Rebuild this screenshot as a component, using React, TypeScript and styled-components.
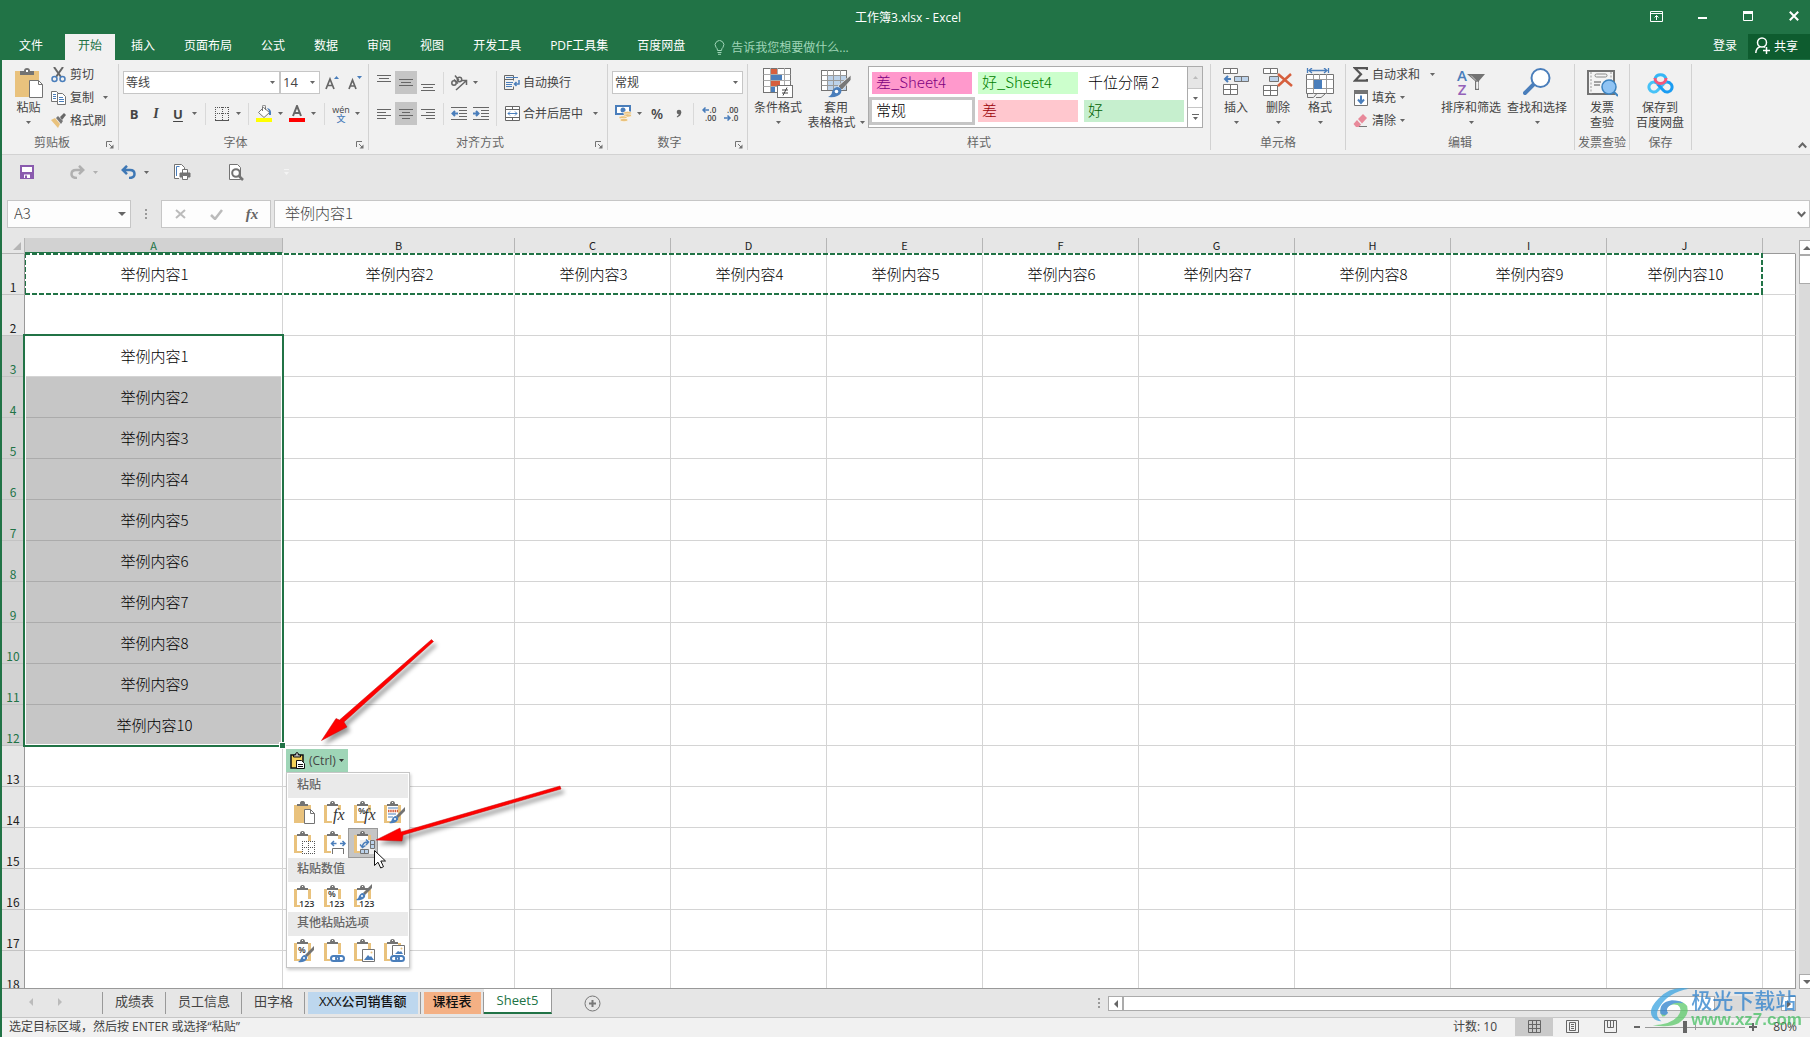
import React from "react";
import styled, { createGlobalStyle, css } from "styled-components";

const UI = `"Open Sans", "Noto Sans CJK SC", sans-serif`;
const SHEET = `"Noto Sans CJK SC", sans-serif`;
const GREEN = "#217346";
const BLUE = "#4a7ebb";
const GREY = "#737373";
const TAN = "#e9c27d";

const Global = createGlobalStyle`
  *, *::before, *::after { box-sizing: border-box; }
  body { margin: 0; font-family: ${UI}; font-size: 12px; color: #444; }
  button, input, select { font: inherit; color: inherit; margin: 0; }
  svg { display: block; flex: none; }
`;

const Window = styled.div`
  height: 100vh;
  display: flex;
  flex-direction: column;
  overflow: hidden;
  background: #e6e6e6;
  border-left: 2px solid ${GREEN};
`;

const plain = css`
  border: 0;
  padding: 0;
  background: transparent;
  white-space: nowrap;
  cursor: default;
`;

/* ---------- title bar and tabs ---------- */
const TitleBar = styled.header`
  display: grid;
  grid-template-columns: 1fr auto 1fr;
  height: 34px;
  background: ${GREEN};
  color: #fff;
`;
const Title = styled.h1`
  grid-column: 2;
  margin: 0;
  padding-left: 4px;
  font-size: 12px;
  font-weight: 400;
  line-height: 35px;
`;
const WindowControls = styled.div`
  display: flex;
  justify-content: flex-end;
  gap: 14px;
`;
const WindowButton = styled.button`
  ${plain}
  width: 32px;
  height: 32px;
  display: grid;
  place-items: center;
`;
const TabRow = styled.nav`
  display: flex;
  gap: 3px;
  height: 26px;
  background: ${GREEN};
  color: #fff;
`;
const Tab = styled.button<{ $active?: boolean; $file?: boolean }>`
  ${plain}
  line-height: 24px;
  padding: ${(p) => (p.$file ? "0 19px 2px 17px" : "0 13px 2px")};
  background: ${(p) => (p.$active ? "#f1f1f1" : "transparent")};
  color: ${(p) => (p.$active ? GREEN : "#fff")};
`;
const TellMe = styled.label`
  display: flex;
  align-items: center;
  gap: 6px;
  flex: 1;
  padding-left: 13px;
  color: #9fd5b7;
`;
const TellInput = styled.input`
  ${plain}
  width: 160px;
  outline: none;
  &::placeholder { color: #9fd5b7; opacity: 1; }
`;
const ShareButton = styled.button`
  ${plain}
  display: flex;
  align-items: center;
  gap: 4px;
  height: 25px;
  padding: 0 12px 2px 7px;
  margin-left: -5px;
  background: #0e5c2f;
  color: #fff;
`;

/* ---------- ribbon ---------- */
const Ribbon = styled.section`
  display: flex;
  height: 95px;
  padding: 4px 0;
  background: #f1f1f1;
  border-bottom: 1px solid #d2d2d2;
`;
const GroupBox = styled.div<{ $w: number }>`
  width: ${(p) => p.$w}px;
  flex: none;
  display: flex;
  flex-direction: column;
  border-right: 1px solid #d2d2d2;
`;
const GroupBody = styled.div<{ $pad?: number }>`
  display: flex;
  height: 72px;
  padding-left: ${(p) => p.$pad ?? 0}px;
`;
const GroupFoot = styled.div<{ $launch?: boolean }>`
  display: grid;
  grid-template-columns: ${(p) => (p.$launch ? "1fr 16px" : "1fr")};
  align-items: center;
  height: 14px;
  line-height: 14px;
  text-align: center;
  white-space: nowrap;
  color: #666;
`;
const Launcher = styled.button`
  ${plain}
  height: 10px;
  display: grid;
  place-items: center;
  align-self: end;
`;
const Rows = styled.div`
  display: flex;
  flex-direction: column;
  gap: 8px;
  padding-top: 7px;
`;
const Row = styled.div`
  display: flex;
  align-items: center;
  height: 23px;
`;
const Sep = styled.span<{ $tall?: boolean; $m?: number }>`
  width: 1px;
  height: ${(p) => (p.$tall ? 55 : 22)}px;
  margin: ${(p) => (p.$tall ? "7px" : "0")} ${(p) => p.$m ?? 4}px 0;
  background: #d9d9d9;
`;
const IconButton = styled.button<{ $w?: number; $on?: boolean }>`
  ${plain}
  width: ${(p) => p.$w ?? 22}px;
  height: 23px;
  display: grid;
  place-items: center;
  background: ${(p) => (p.$on ? "#c5c5c5" : "transparent")};
`;
const Letter = styled.span<{ $i?: boolean; $u?: boolean; $thin?: boolean }>`
  font-size: ${(p) => (p.$i || p.$thin ? 14 : 13)}px;
  line-height: 16px;
  font-weight: ${(p) => (p.$thin ? 600 : 700)};
  font-family: ${(p) => (p.$i ? `"Liberation Serif", serif` : UI)};
  font-style: ${(p) => (p.$i ? "italic" : "normal")};
  text-decoration: ${(p) => (p.$u ? "underline" : "none")};
  text-underline-offset: 2px;
`;
const TextButton = styled.button`
  ${plain}
  display: flex;
  align-items: center;
  gap: 3px;
  height: 23px;
  line-height: 23px;
`;
const Spread = styled.span<{ $w: number }>`
  width: ${(p) => p.$w}px;
  display: flex;
  justify-content: flex-end;
`;
const Stack = styled.div`
  display: flex;
  flex-direction: column;
  align-items: flex-start;
  & > button { padding-bottom: 2px; gap: 4px; }
`;
const BigButton = styled.button<{ $w: number }>`
  ${plain}
  width: ${(p) => p.$w}px;
  height: 68px;
  padding-top: 2px;
  display: flex;
  flex-direction: column;
  align-items: center;
  line-height: 15px;
  flex: none;
`;
const BigIcon = styled.span`
  height: 34px;
  padding-top: 2px;
`;
const BigCaret = styled.span`
  height: 15px;
  display: grid;
  place-items: center;
`;
const CaretLine = styled.span`
  display: flex;
  align-items: center;
  gap: 4px;
`;
const SelectBox = styled.span<{ $w: number }>`
  display: grid;
  grid-template-columns: 1fr 14px;
  align-items: center;
  width: ${(p) => p.$w}px;
  height: 23px;
  background: #fff;
  border: 1px solid #c6c6c6;
`;
const Select = styled.select<{ $size?: number }>`
  ${plain}
  appearance: none;
  grid-area: 1 / 1 / 2 / 3;
  width: 100%;
  height: 21px;
  line-height: 21px;
  padding-left: 2px;
  font-size: ${(p) => p.$size ?? 12}px;
  outline: none;
`;
const SelectArrow = styled.span`
  grid-area: 1 / 2;
  pointer-events: none;
  display: grid;
  place-items: center;
`;

/* ---------- style gallery ---------- */
const Gallery = styled.div`
  display: flex;
  flex: none;
  width: 335px;
  height: 62px;
  margin: 2px 0 0 2px;
  background: #fff;
  border: 1px solid #ababab;
`;
const Swatches = styled.div`
  flex: 1;
  display: grid;
  grid-template-columns: repeat(3, 106px);
  grid-template-rows: 28px 28px;
  padding-top: 2px;
`;
const Swatch = styled.button<{ $bg: string; $fg: string; $on?: boolean }>`
  ${plain}
  padding: 0 4px 2px;
  text-align: left;
  font-family: ${SHEET};
  font-size: 15px;
  font-weight: 300;
  line-height: 20px;
  color: ${(p) => p.$fg};
  background: ${(p) => p.$bg};
  background-clip: padding-box;
  border: 3px solid ${(p) => (p.$on ? "#c6c6c6" : "transparent")};
`;
const GalleryNav = styled.div`
  width: 15px;
  display: grid;
  grid-template-rows: 21px 19px 20px;
  border-left: 1px solid #ababab;
`;
const GalleryStep = styled.button<{ $off?: boolean }>`
  ${plain}
  display: grid;
  place-items: center;
  background: ${(p) => (p.$off ? "#e6e6e6" : "#fff")};
  & + & { border-top: 1px solid #c6c6c6; }
`;
const Collapse = styled.button`
  ${plain}
  margin-left: auto;
  align-self: flex-end;
  padding: 0 3px 1px 0;
`;

/* ---------- quick access and formula bar ---------- */
const Quick = styled.div`
  display: flex;
  align-items: center;
  height: 45px;
  padding: 0 0 11px 14px;
`;
const QuickButton = styled.button<{ $gap?: number; $drop?: boolean }>`
  ${plain}
  width: ${(p) => (p.$drop ? 14 : 22)}px;
  height: 24px;
  margin-right: ${(p) => p.$gap ?? 0}px;
  display: grid;
  place-items: center;
`;
const FormulaRow = styled.div`
  display: flex;
  height: 28px;
  padding-left: 5px;
  font-family: ${SHEET};
  font-size: 15px;
`;
const Boxed = styled.div<{ $w?: number }>`
  display: flex;
  align-items: center;
  width: ${(p) => (p.$w ? `${p.$w}px` : "auto")};
  flex: ${(p) => (p.$w ? "none" : "1")};
  background: #fdfdfd;
  border: 1px solid #c6c6c6;
`;
const BarInput = styled.input<{ $pad: number }>`
  ${plain}
  flex: 1;
  min-width: 0;
  height: 26px;
  padding: 0 0 3px ${(p) => p.$pad}px;
  font-weight: 300;
  outline: none;
`;
const BoxEnd = styled.span`
  width: 16px;
  display: grid;
  place-items: center;
`;
const Dots = styled.span<{ $w: number }>`
  width: ${(p) => p.$w}px;
  display: grid;
  place-items: center;
`;
const FnButton = styled.button`
  ${plain}
  flex: 1;
  height: 26px;
  display: grid;
  place-items: center;
`;
const Fx = styled.span`
  font: italic 700 15px/18px "Liberation Serif", serif;
  color: #666;
`;

/* ---------- grid ---------- */
const GridArea = styled.main`
  flex: 1;
  min-height: 0;
  display: flex;
  margin-top: 10px;
`;
const GridView = styled.div`
  position: relative;
  flex: 1;
  min-width: 0;
  overflow: hidden;
  border-bottom: 1px solid #999;
`;
const Table = styled.table`
  width: 100%;
  table-layout: fixed;
  border-collapse: separate;
  border-spacing: 0;
  font-family: ${SHEET};
`;
const ColHead = styled.th<{ $on?: boolean }>`
  height: 16px;
  padding: 0;
  font-size: 11px;
  font-weight: 400;
  line-height: 13px;
  color: ${(p) => (p.$on ? GREEN : "#222")};
  background: ${(p) => (p.$on ? "#d2d2d2" : "#e6e6e6")};
  border-right: 1px solid #b5b5b5;
  border-bottom: ${(p) => (p.$on ? `2px solid ${GREEN}` : "1px solid #999")};
  &:last-child { border-right-color: transparent; }
`;
const Corner = styled.td`
  padding: 0 3px 0 0;
  background: #e6e6e6;
  border-right: 1px solid #b5b5b5;
  border-bottom: 1px solid #b5b5b5;
  svg { margin-left: auto; }
`;
const RowHead = styled.th<{ $on?: boolean }>`
  height: 41px;
  padding: 0;
  vertical-align: bottom;
  font-size: 12px;
  font-weight: 400;
  line-height: 14px;
  color: ${(p) => (p.$on ? GREEN : "#222")};
  background: ${(p) => (p.$on ? "#d2d2d2" : "#e6e6e6")};
  border-right: 1px solid #999;
  border-bottom: 1px solid #c3c3c3;
`;
const Cell = styled.td<{ $fill?: boolean }>`
  height: 41px;
  padding: 0 0 0 2px;
  text-align: center;
  font-size: 15px;
  font-weight: 300;
  line-height: 24px;
  color: #000;
  background: ${(p) => (p.$fill ? "#c6c6c6" : "#fff")};
  border-right: 1px solid #d4d4d4;
  border-bottom: 1px solid ${(p) => (p.$fill ? "#ababab" : "#d4d4d4")};
  &:last-child { border-right-color: #999; }
`;
const Selection = styled.div`
  position: absolute;
  left: 21px;
  top: 96px;
  width: 261px;
  height: 413px;
  border: 2px solid ${GREEN};
  box-shadow: inset 0 0 0 1px #fff;
  pointer-events: none;
  &::after {
    content: "";
    position: absolute;
    right: -4px;
    bottom: -4px;
    width: 7px;
    height: 7px;
    background: ${GREEN};
    border: 1px solid #fff;
  }
`;
const dashX = `repeating-linear-gradient(90deg, ${GREEN} 0 5px, #fff 5px 7px)`;
const dashY = `repeating-linear-gradient(180deg, ${GREEN} 0 5px, #fff 5px 7px)`;
const CopyMarquee = styled.div`
  position: absolute;
  left: 23px;
  top: 15px;
  width: 1738px;
  height: 42px;
  pointer-events: none;
  background: ${dashX} 0 0 / 100% 2px no-repeat, ${dashX} 0 100% / 100% 2px no-repeat,
    ${dashY} 0 0 / 1px 100% no-repeat, ${dashY} 100% 0 / 2px 100% no-repeat;
`;
const PasteOptions = styled.div`
  position: absolute;
  left: 284px;
  top: 511px;
`;
const CtrlButton = styled.button`
  ${plain}
  display: flex;
  align-items: center;
  gap: 3px;
  width: 62px;
  height: 23px;
  padding-left: 4px;
  background: #9fd5b7;
`;
const Menu = styled.div`
  width: 124px;
  padding: 1px;
  background: #fff;
  border: 1px solid #c6c6c6;
  box-shadow: 1px 2px 3px rgba(0, 0, 0, 0.2);
`;
const MenuHead = styled.div`
  height: 24px;
  padding-left: 9px;
  line-height: 22px;
  font-weight: 500;
  color: #666;
  background: #eaeaea;
`;
const MenuGrid = styled.div`
  display: grid;
  grid-template-columns: repeat(4, 30px);
  grid-auto-rows: 30px;
`;
const MenuItem = styled.button<{ $on?: boolean }>`
  ${plain}
  display: grid;
  place-items: center;
  background: ${(p) => (p.$on ? "#c5c5c5" : "transparent")};
  box-shadow: ${(p) => (p.$on ? "inset 0 0 0 1px #999" : "none")};
`;
const Annotation = styled.svg`
  position: absolute;
  left: 308px;
  top: 392px;
  pointer-events: none;
  filter: drop-shadow(3px 4px 2px rgba(0, 0, 0, 0.4));
`;
const Pointer = styled.svg`
  position: absolute;
  left: 371px;
  top: 611px;
`;
const VScroll = styled.div`
  width: 14px;
  padding: 2px 0 0 3px;
  display: flex;
  flex-direction: column;
  overflow: hidden;
`;
const VTrack = styled.div`
  flex: 1;
  width: 16px;
  background: #dadada;
`;
const VThumb = styled.div`
  height: 29px;
  background: #fff;
  border: 1px solid #ababab;
`;
const ScrollButton = styled.button`
  ${plain}
  width: 15px;
  height: 15px;
  flex: none;
  display: grid;
  place-items: center;
  background: #fff;
  border: 1px solid #ababab;
`;

/* ---------- sheet tabs and status ---------- */
const SheetBar = styled.div`
  display: flex;
  height: 28px;
  font-family: ${UI};
  font-size: 13px;
`;
const SheetNav = styled.div`
  width: 100px;
  display: flex;
  align-items: center;
  gap: 21px;
  padding: 0 0 2px 25px;
`;
const SheetTab = styled.button<{ $bg?: string; $on?: boolean; $pad?: number }>`
  ${plain}
  height: 22px;
  margin: 3px 2px 0 3px;
  line-height: 17px;
  padding: 0 ${(p) => p.$pad ?? 9}px 3px;
  color: ${(p) => (p.$bg ? "#111" : "#444")};
  font-weight: ${(p) => (p.$bg ? 500 : 400)};
  background: ${(p) => p.$bg ?? "transparent"};
  ${(p) =>
    p.$on &&
    css`
      height: 25px;
      margin: 0;
      padding: 0 13px 1px;
      line-height: 20px;
      color: ${GREEN};
      background: #fff;
      border-right: 1px solid #999;
      border-bottom: 2px solid ${GREEN};
    `}
`;
const TabSep = styled.span`
  width: 1px;
  height: 22px;
  margin-top: 3px;
  background: #999;
`;
const AddSheet = styled.button`
  ${plain}
  margin: 0 0 0 32px;
`;
const HScroll = styled.div`
  display: flex;
  width: 706px;
  height: 15px;
  margin: 7px 14px 0 auto;
`;
const HTrack = styled.div`
  flex: 1;
  background: #dadada;
`;
const HThumb = styled.div`
  width: 90%;
  height: 15px;
  background: #fff;
  border: 1px solid #ababab;
`;
const StatusBar = styled.footer`
  display: flex;
  align-items: center;
  height: 20px;
  padding: 0 13px 2px 7px;
  background: #f1f1f1;
  border-top: 1px solid #c6c6c6;
  line-height: 17px;
`;
const Count = styled.span`
  margin: 0 18px 0 auto;
`;
const ViewButton = styled.button<{ $on?: boolean }>`
  ${plain}
  width: 38px;
  height: 19px;
  display: grid;
  place-items: center;
  background: ${(p) => (p.$on ? "#cacaca" : "transparent")};
`;
const ZoomStep = styled.button`
  ${plain}
  width: 16px;
  height: 18px;
  display: grid;
  place-items: center;
`;
const Zoom = styled.input`
  appearance: none;
  width: 100px;
  height: 12px;
  background: linear-gradient(#999, #999) 0 6px / 100% 1px no-repeat,
    linear-gradient(#999, #999) 50px 4px / 1px 5px no-repeat;
  &::-webkit-slider-thumb {
    appearance: none;
    width: 4px;
    height: 12px;
    background: #666;
  }
`;
const ZoomText = styled.span`
  width: 36px;
  text-align: right;
`;
const Watermark = styled.div`
  position: fixed;
  right: 8px;
  bottom: 9px;
  display: flex;
  align-items: flex-end;
  opacity: 0.75;
  pointer-events: none;
`;
const WatermarkText = styled.div`
  font-family: ${SHEET};
  font-size: 21px;
  font-weight: 500;
  line-height: 26px;
  color: #2a7fcb;
`;
const WatermarkUrl = styled.div`
  font-family: "Liberation Sans", sans-serif;
  font-size: 17px;
  line-height: 16px;
  font-weight: 700;
  color: #45bf62;
`;

/* ---------- icons ---------- */
const Caret = ({ c = "#666" }: { c?: string }) => (
  <svg width="5" height="3" viewBox="0 0 5 3"><path d="M0 0h5L2.5 3z" fill={c} /></svg>
);
const LaunchIcon = () => (
  <svg width="8" height="8" viewBox="0 0 8 8" fill="none" stroke={GREY}>
    <path d="M.5 6V.5H6M3 3l3 3" /><path d="M7.5 3.5v4h-4z" fill={GREY} stroke="none" />
  </svg>
);
const Lines = ({ rows }: { rows: [number, number, number][] }) => (
  <svg width="14" height="16" viewBox="0 0 14 16" stroke="#666">
    {rows.map(([x, w, y]) => <path key={y} d={`M${x} ${y + 0.5}h${w}`} />)}
  </svg>
);
const PasteIcon = () => (
  <svg width="28" height="31" viewBox="0 0 28 31">
    <rect y="3" width="24" height="26" fill={TAN} />
    <path d="M5 7V3h4a3 3 0 0 1 6 0h4v4z" fill={GREY} /><rect x="11" y="2" width="2" height="2" fill="#fff" />
    <path d="M14.500 12.500h9l4 4v13h-13z" fill="#fff" stroke={GREY} /><path d="M23.500 12.500v4h4" fill="none" stroke={GREY} />
  </svg>
);
const CutIcon = () => (
  <svg width="15" height="16" viewBox="0 0 15 16" fill="none">
    <path d="M3 0l7 10M12 0L5 10" stroke="#666" strokeWidth="2" />
    <circle cx="3.500" cy="12" r="2.500" stroke={BLUE} strokeWidth="1.500" /><circle cx="11.500" cy="12" r="2.500" stroke={BLUE} strokeWidth="1.500" />
  </svg>
);
const CopyIcon = () => (
  <svg width="15" height="15" viewBox="0 0 15 15" stroke={GREY}>
    <path d="M.5 1.500h5l2 2v8h-7z" fill="#fff" /><path d="M2 4.500h3M2 6.500h3M2 8.500h3" stroke={BLUE} />
    <path d="M6.500 3.500h5l3 3v8h-8z" fill="#fff" /><path d="M8 7.500h4M8 9.500h5M8 11.500h5" stroke={BLUE} />
  </svg>
);
const BrushIcon = () => (
  <svg width="15" height="15" viewBox="0 0 15 15">
    <path d="M0 7l4-2 5 6-2 4z" fill={TAN} /><path d="M5 5l2-2 5 5-2 3z" fill="#777" /><path d="M9 4l4-4 2 2-4 5z" fill="#666" />
  </svg>
);
const BorderIcon = () => (
  <svg width="14" height="14" viewBox="0 0 14 14" stroke="#555" fill="none">
    <path d="M0 .5h14M0 6.500h14M.5 0v13M7.500 0v13M13.500 0v13" strokeDasharray="1 1" /><path d="M0 13.500h14" />
  </svg>
);
const FillIcon = () => (
  <svg width="16" height="17" viewBox="0 0 16 17">
    <path d="M2.500 7.500l5-5 6 5-5.500 5z" fill="#fff" stroke="#777" /><path d="M6.500 6V1.500a1.500 1.500 0 0 1 3 0V5" fill="none" stroke="#777" />
    <path d="M11 3q5 1 4 7h-2V6z" fill={BLUE} /><rect y="13" width="16" height="4" fill="#ff0" />
  </svg>
);
const FontColorIcon = () => (
  <svg width="16" height="17" viewBox="0 0 16 17">
    <path d="M4 11L8 1l4 10M5.500 8h5" fill="none" stroke="#666" strokeWidth="2" /><rect y="13" width="16" height="4" fill="#f00" />
  </svg>
);
const Pinyin = styled.span`
  display: flex;
  flex-direction: column;
  align-items: center;
  font-size: 9px;
  line-height: 9px;
`;
const PinyinHan = styled.span`
  color: ${BLUE};
  font-weight: 500;
`;
const FontStep = ({ up }: { up?: boolean }) => (
  <svg width="14" height="15" viewBox="0 0 14 15">
    <path d={up ? "M1 14L5 4l4 10M2.500 10.500h5" : "M1 14l3.500-9L8 14M2.500 11h4"} fill="none" stroke="#666" strokeWidth="1.700" />
    <path d={up ? "M9 4l2.500-3L14 4z" : "M9 1h5l-2.500 3z"} fill={BLUE} />
  </svg>
);
const AngleIcon = () => (
  <svg width="18" height="16" viewBox="0 0 18 16" fill="none" stroke="#666">
    <circle cx="4" cy="8" r="2.200" strokeWidth="1.500" /><path d="M4 4.500l4 4" strokeWidth="1.500" />
    <circle cx="9.500" cy="4.500" r="2.200" strokeWidth="1.500" /><path d="M5 .5l4 5" strokeWidth="1.500" />
    <path d="M6 15L16 6M12 5.500h4.500V10" strokeWidth="1.500" />
  </svg>
);
const IndentIcon = ({ out }: { out?: boolean }) => (
  <svg width="16" height="13" viewBox="0 0 16 13" stroke="#666">
    <path d="M0 .5h16M8 3.500h8M8 6.500h8M8 9.500h8M0 12.500h16" />
    <path d={out ? "M7 6.500H1.500M4 4L1.500 6.500 4 9" : "M0 6.500h5.500M3 4l2.500 2.500L3 9"} fill="none" stroke={BLUE} strokeWidth="2" />
  </svg>
);
const WrapIcon = () => (
  <svg width="16" height="16" viewBox="0 0 16 16" fill="none" stroke="#666">
    <path d="M9.500 5.500v-5h-9v14h9v-3M.5 4.500h9" /><path d="M2 2.500h12M2 7.500h7M2 9.500h6M2 11.500h6" stroke={BLUE} />
    <path d="M15 5v4h-4M12.500 7L10.500 9l2 2" stroke={BLUE} strokeWidth="1.500" />
  </svg>
);
const MergeIcon = () => (
  <svg width="15" height="15" viewBox="0 0 15 15" fill="#fff" stroke="#666">
    <path d="M.5.5h14v14H.5zM.5 3.500h14M.5 11.500h14M7.500 0v3.500M7.500 11.500V15" />
    <path d="M3 7.500h9M5 5.500l-2 2 2 2M10 5.500l2 2-2 2" stroke={BLUE} fill="none" />
  </svg>
);
const MoneyIcon = () => (
  <svg width="17" height="17" viewBox="0 0 17 17">
    <rect x="1" y="1" width="14" height="8" fill="#fff" stroke={BLUE} strokeWidth="2" /><circle cx="8" cy="5" r="2.500" fill={BLUE} />
    <g fill={TAN} stroke="#fff" strokeWidth=".6"><ellipse cx="12.500" cy="8" rx="4" ry="1.700" /><ellipse cx="12.500" cy="10.500" rx="4" ry="1.700" /><ellipse cx="8" cy="12.500" rx="4" ry="1.700" /><ellipse cx="9" cy="15" rx="4" ry="1.700" /></g>
  </svg>
);
const CommaIcon = () => (
  <svg width="6" height="9" viewBox="0 0 6 9"><circle cx="3" cy="3" r="2.300" fill="#666" /><path d="M5.300 3Q5.300 7 1 8.500L.8 7.500Q3 6.500 3 4z" fill="#666" /></svg>
);
const Decimals = styled.span`
  display: grid;
  justify-items: end;
  font-size: 8px;
  line-height: 8px;
  font-weight: 600;
`;
const DecimalLine = styled.span`
  display: flex;
  align-items: center;
`;
const TinyArrow = ({ left }: { left?: boolean }) => (
  <svg width="8" height="6" viewBox="0 0 8 6" fill="none" stroke={BLUE} strokeWidth="1.500">
    <path d={left ? "M7 3H1M3.500.5L1 3l2.500 2.500" : "M0 3h6M3.500.5L6 3 3.500 5.500"} />
  </svg>
);
const CondIcon = () => (
  <svg width="30" height="30" viewBox="0 0 30 30">
    <rect x=".5" y=".5" width="27" height="24" fill="#fff" stroke={GREY} />
    <path d="M.5 6.500h27M.5 12.500h27M.5 18.500h27M7.500 0v24M14.500 0v24M21.500 0v24" stroke="#aaa" />
    <path d="M8 1h6v5H8zM8 13h9v5H8z" fill="#d65f3d" /><path d="M8 7h11v5H8zM8 19h4v5H8z" fill={BLUE} />
    <rect x="14.500" y="17.500" width="15" height="12" fill="#fff" stroke={GREY} /><path d="M19 22h6M19 25h6M24 19.500l-4 8" stroke="#444" />
  </svg>
);
const TableIcon = () => (
  <svg width="30" height="30" viewBox="0 0 30 30">
    <rect x=".5" y="2.500" width="25" height="20" fill="#fff" stroke={GREY} /><path d="M7 8h18v14H7z" fill="#bcd2ea" />
    <path d="M.5 7.500h25M.5 12.500h25M.5 17.500h25M6.500 2v20M12.500 2v20M19.500 2v20" stroke="#999" />
    <path d="M30 7v5l-9 10-4-4z" fill="#777" stroke="#f1f1f1" strokeWidth=".8" /><path d="M16 19q6 0 4 6-3 5-13 4 4-2 4-5 1-4 5-5z" fill={BLUE} /><circle cx="15.500" cy="23.500" r="1.800" fill="#fff" />
  </svg>
);
const InsertIcon = () => (
  <svg width="26" height="30" viewBox="0 0 26 30" fill="#fff" stroke={GREY}>
    <path d="M.5.5h14v5H.5zM7.500.5v5M.5 16.500h14v10H.5zM.5 21.500h14M7.500 16.500v10" />
    <path d="M11.500 8.500h14v5h-14zM18.500 8.500v5" fill="#bcd2ea" /><path d="M8 11H2M5 8l-3 3 3 3" fill="none" stroke={BLUE} strokeWidth="2" />
  </svg>
);
const DeleteIcon = () => (
  <svg width="30" height="30" viewBox="0 0 30 30" fill="#fff" stroke={GREY}>
    <path d="M.5.5h14v5H.5zM7.500.5v5M.5 17.500h14v10H.5zM.5 22.500h14M7.500 17.500v10" />
    <path d="M6.500 8.500h9v5h-9z" fill="#bcd2ea" /><path d="M15 6l14 12M28 6L15 18" stroke="#d65f3d" strokeWidth="2.500" />
  </svg>
);
const FormatIcon = () => (
  <svg width="29" height="32" viewBox="0 0 29 32" fill="#fff" stroke={GREY}>
    <path d="M.5 6.500h27v19H.5z" /><path d="M.5 11.500h27M.5 20.500h27M7.500 6v20M13.500 6v5M20.500 6v20" stroke="#999" />
    <path d="M8 12h8v9H8z" fill={BLUE} stroke="none" /><path d="M1.500 26v3.500h6l3-3.500M10 29.500h5l4-3.500" fill="none" />
    <path d="M1.500 0v5M22.500 0v5M3 2.500h18M6 0L3 2.500 6 5M18 0l3 2.500L18 5" stroke={BLUE} strokeWidth="1.300" fill="none" />
  </svg>
);
const SigmaIcon = () => (
  <svg width="15" height="15" viewBox="0 0 15 15" fill="none" stroke="#555" strokeWidth="2.200"><path d="M14 3V1.200H2l6 6-6 6.500h12V12" /></svg>
);
const DownFillIcon = () => (
  <svg width="15" height="16" viewBox="0 0 15 16" fill="#fff" stroke={GREY}>
    <path d="M1.500.5h13v15h-13z" /><path d="M1 0h14v4H1z" fill={GREY} stroke="none" /><path d="M8 5.500v7M5 9.500l3 3.500 3-3.500" fill="none" stroke={BLUE} strokeWidth="2" />
  </svg>
);
const EraserIcon = () => (
  <svg width="15" height="14" viewBox="0 0 15 14">
    <path d="M5 5l5-5 4 4-5 5.500z" fill="#e8899a" /><path d="M4 6l4 4.500L6 13H3L.5 10z" fill="#e8899a" /><path d="M6 12.500h8" stroke="#777" />
  </svg>
);
const SortGlyph = styled.span`
  display: flex;
  align-items: center;
  padding-bottom: 2px;
`;
const SortLetters = styled.span`
  display: grid;
  font-size: 15px;
  line-height: 14px;
  font-weight: 600;
  color: ${BLUE};
  & > span + span { color: #9461b8; }
`;
const FunnelIcon = () => (
  <svg width="18" height="17" viewBox="0 0 18 17"><path d="M0 0h18l-6 7v9H8V7z" fill={GREY} /><path d="M9.500 8h1.500v6.500H9.500zM4 1.500l5 5" stroke="#f1f1f1" fill="#f1f1f1" strokeWidth=".7" /></svg>
);
const FindIcon = () => (
  <svg width="28" height="28" viewBox="0 0 28 28"><path d="M11 16L2 25" stroke={BLUE} strokeWidth="4" strokeLinecap="round" /><circle cx="17.500" cy="10" r="9" fill="#fff" stroke={BLUE} strokeWidth="2" /></svg>
);
const InvoiceIcon = () => (
  <svg width="31" height="30" viewBox="0 0 31 30" fill="none">
    <path d="M1 3h26v23H1z" fill="#f4f4f4" stroke={GREY} strokeWidth="2" /><path d="M4 4v22M24 4v10" stroke="#999" strokeDasharray="2 1.500" />
    <rect x="8" y="6" width="12" height="3" rx="1.500" stroke="#888" /><path d="M7 14h7M7 17h6" stroke="#888" strokeWidth="1.500" />
    <circle cx="22" cy="19" r="7" fill="#8fc3f3" stroke="#3c83c0" strokeWidth="1.500" /><path d="M27 24l4 4" stroke="#3c83c0" strokeWidth="2" />
  </svg>
);
const CloudIcon = () => (
  <svg width="27" height="26" viewBox="0 0 27 26" fill="none" strokeWidth="3">
    <path d="M7 14a5 5 0 1 0 3.700 8.300L16.500 16" stroke="#46c2f7" />
    <path d="M20 14a5 5 0 1 1-3.700 8.300L10.500 16" stroke="#1a9cf2" />
    <path d="M7 14q2 0 4 2M20 14q-2 0-4 2" stroke="#35b6f5" />
    <path d="M8 11a5.700 5.700 0 0 1 11 0" stroke="#35b6f5" />
    <path d="M8 10a5.500 5.500 0 0 0 11 0" stroke="#f4577a" />
  </svg>
);
const SaveIcon = () => (
  <svg width="14" height="14" viewBox="0 0 14 14"><path d="M1 1h12v12H1z" fill="#fff" stroke="#8a5bae" strokeWidth="2" /><path d="M1 7h12v6H1z" fill="#8a5bae" /><path d="M4 9.500h6V13H4z" fill="#fff" /><path d="M5 10.500h2V13H5z" fill="#8a5bae" /></svg>
);
const TurnIcon = ({ c, flip }: { c: string; flip?: boolean }) => (
  <svg width="15" height="14" viewBox="0 0 15 14"><g transform={flip ? "translate(15 0) scale(-1 1)" : undefined} fill="none" stroke={c} strokeWidth="2.500"><path d="M2 5h7q4.500 0 4.500 4T8 13M6 .8L1.800 5 6 9.200" /></g></svg>
);
const PrintIcon = () => (
  <svg width="17" height="17" viewBox="0 0 17 17" fill="#fff" stroke={GREY}>
    <path d="M5 14.500H.5V.5h7l3 3V6" /><path d="M2.500 12V2.500h3" fill="none" stroke={BLUE} /><path d="M8.500 9V5.500h5V9" /><path d="M6 9h10v4H6z" fill={GREY} /><path d="M8.500 11.500h5v4h-5z" />
  </svg>
);
const PreviewIcon = () => (
  <svg width="15" height="17" viewBox="0 0 15 17" fill="#fff" stroke={GREY}>
    <path d="M.5.5h8l3 3v12H.5z" /><circle cx="7" cy="9" r="3.800" strokeWidth="2" /><path d="M10 12l4 4" strokeWidth="2.500" />
  </svg>
);
const VDots = () => (
  <svg width="2" height="11" viewBox="0 0 2 11" fill="#999"><path d="M0 0h2v2H0zM0 4h2v2H0zM0 8h2v2H0z" /></svg>
);
const Chevron = ({ up }: { up?: boolean }) => (
  <svg width="9" height="7" viewBox="0 0 9 7" fill="none" stroke="#666" strokeWidth="2"><path d={up ? "M.8 5.500l3.700-4 3.700 4" : "M.8 1l3.700 4 3.700-4"} /></svg>
);
const Tri = ({ d, c = "#666" }: { d: "u" | "d" | "l" | "r"; c?: string }) => {
  const p = { u: "M0 6l4-4 4 4z", d: "M0 2h8L4 6z", l: "M6 0v8L2 4z", r: "M2 0v8l4-4z" }[d];
  return <svg width="8" height="8" viewBox="0 0 8 8"><path d={p} fill={c} /></svg>;
};

const Brush = ({ x = 0, y = 0 }: { x?: number; y?: number }) => (
  <g transform={`translate(${x} ${y})`}><path d="M16 0v4L9 11 7 9z" fill={GREY} /><path d="M6 9q4 0 3 4-3 4-9 3 3-2 3-4 1-2 3-3z" fill={BLUE} /><circle cx="6" cy="12" r="1" fill="#fff" /></g>
);
const Link = () => (
  <g fill="none" stroke={BLUE} strokeWidth="2"><rect x="13" y="21" width="8" height="5" rx="2.500" /><rect x="18" y="21" width="8" height="5" rx="2.500" /></g>
);
const GlyphText = styled.text<{ $serif?: boolean }>`
  font: ${(p) => (p.$serif ? `italic 400 16px "Liberation Serif", serif` : `600 9px ${UI}`)};
  fill: #333;
`;
const overlays: Record<string, React.ReactNode> = {
  all: <><path d="M6 8h17v18H6z" fill={TAN} /><path d="M16.500 12.500h6l4 4v10h-10z" fill="#fff" stroke={GREY} /><path d="M22.500 12.500v4h4" fill="none" stroke={GREY} /></>,
  fx: <><path d="M14 13h13v13H14z" fill="#fff" /><GlyphText $serif x="15" y="23">fx</GlyphText></>,
  numfx: <><path d="M17 15h8v12h-8z" fill="#fff" /><GlyphText x="10" y="17">%</GlyphText><GlyphText $serif x="16" y="23">fx</GlyphText></>,
  keep: <><path d="M10 11h10M10 17h8M10 20h5" stroke={BLUE} /><path d="M10 14h10" stroke="#d65f3d" strokeWidth="2.500" strokeDasharray="1.500 .7" /><Brush x={11} y={10} /></>,
  noborder: <><path d="M14 14h13v13H14z" fill="#fff" /><path d="M14 14.500h13M14 20.500h13M14 26.500h13M14.500 14v13M20.500 14v13M26.500 14v13" fill="none" stroke="#555" strokeDasharray="1 1" /></>,
  width: <><path d="M13 12h14v15H13z" fill="#fff" /><path d="M14.500 27v-5.500h11V27" fill="none" stroke={GREY} /><path d="M13.500 16.500h5M22 16.500h5M16 14l-2.500 2.500L16 19M24.500 14l2.500 2.500-2.500 2.500" fill="none" stroke={BLUE} strokeWidth="1.500" /></>,
  transpose: <><path d="M12 13h15v14H12z" fill="#eee" /><path d="M14.500 20q0-5 5.500-5M12 17.500l2.500 3 3-2M18 12.500l2.500 2.500-2.500 3" fill="none" stroke={BLUE} strokeWidth="1.500" /><path d="M22.500 13.500h4v8h-4zM22.500 17.500h4M12.500 22.500h8v4h-8zM16.500 22.500v4" fill="#bcd2ea" stroke={GREY} /></>,
  v: <><path d="M12 18h15v8H12z" fill="#fff" /><GlyphText x="11" y="26">123</GlyphText></>,
  vnum: <><path d="M12 18h15v8H12z" fill="#fff" /><GlyphText x="10" y="16">%</GlyphText><GlyphText x="11" y="26">123</GlyphText></>,
  vfmt: <><path d="M12 18h15v8H12z" fill="#fff" /><Brush x={8} y={3} /><GlyphText x="11" y="26">123</GlyphText></>,
  fmt: <><GlyphText x="10" y="18">%</GlyphText><Brush x={10} y={11} /></>,
  link: <><path d="M12 19h14v8H12z" fill="#fff" /><Link /></>,
  pic: <><path d="M14.500 14.500h12v12h-12z" fill="#fff" stroke={GREY} /><path d="M16 25l4-5 2 2 1-1 3 4z" fill={BLUE} /><circle cx="23.500" cy="17.500" r="1" fill={TAN} /></>,
  piclink: <><path d="M14.500 10.500h12v12h-12z" fill="#fff" stroke={GREY} /><path d="M17 19l3-3 2 1 1-1 2 3z" fill={BLUE} /><circle cx="23.500" cy="13.500" r="1" fill={TAN} /><path d="M12 20h15v7H12z" fill="#fff" /><Link /></>,
};
const ClipIcon = ({ kind }: { kind: string }) => (
  <svg width="30" height="30" viewBox="0 0 30 30">
    <path d="M6 7h17v18H6z" fill={TAN} /><path d="M9 8h11v15H9z" fill="#fff" />
    <path d="M9 8V6h3q0-3 2.500-3T17 6h3v2z" fill={GREY} /><rect x="14" y="4" width="1" height="1" fill="#fff" />
    <g transform="translate(0 -1)">{overlays[kind]}</g>
    {kind === "all" && <path d="M9 8V6h3q0-3 2.500-3T17 6h3v2z" fill={GREY} />}
  </svg>
);

/* ---------- composed parts ---------- */
const Group = ({ name, w, pad, launch, children }: { name: string; w: number; pad?: number; launch?: boolean; children: React.ReactNode }) => (
  <GroupBox $w={w}>
    <GroupBody $pad={pad}>{children}</GroupBody>
    <GroupFoot $launch={launch}>
      <span>{name}</span>
      {launch && <Launcher aria-label={`${name}设置`}><LaunchIcon /></Launcher>}
    </GroupFoot>
  </GroupBox>
);
const Drop = ({ label }: { label: string }) => <IconButton $w={11} aria-label={label}><Caret /></IconButton>;
const Big = ({ w, icon, lines, caret }: { w: number; icon: React.ReactNode; lines: string[]; caret?: boolean }) => (
  <BigButton $w={w}>
    <BigIcon>{icon}</BigIcon>
    {lines.map((l, i) =>
      caret && i === 1 ? <CaretLine key={l}>{l}<Caret /></CaretLine> : <span key={l}>{l}</span>
    )}
    {caret && lines.length === 1 && <BigCaret><Caret /></BigCaret>}
  </BigButton>
);
const Combo = ({ w, value, label }: { w: number; value: string; label: string }) => (
  <SelectBox $w={w}>
    <Select aria-label={label} defaultValue={value} $size={value === "14" ? 13 : 12}><option>{value}</option></Select>
    <SelectArrow><Caret /></SelectArrow>
  </SelectBox>
);

const tabs = ["插入", "页面布局", "公式", "数据", "审阅", "视图", "开发工具", "PDF工具集", "百度网盘"];
const cols = "ABCDEFGHIJ".split("");
const rows = Array.from({ length: 18 }, (_, i) => i + 1);
const text = (r: number, c: number) => {
  if (r === 1) return `举例内容${c + 1}`;
  if (c === 0 && r >= 3 && r <= 12) return `举例内容${r - 2}`;
  return "";
};
const swatches = [
  ["差_Sheet4", "#ff99cc", "#800080"],
  ["好_Sheet4", "#ccffcc", "#008000"],
  ["千位分隔 2", "#fff", "#000"],
  ["常规", "#fff", "#000"],
  ["差", "#ffc7ce", "#9c0006"],
  ["好", "#c6efce", "#006100"],
];
const menu: { head: string; items: [string, string][] }[] = [
  { head: "粘贴", items: [["all", "粘贴"], ["fx", "公式"], ["numfx", "公式和数字格式"], ["keep", "保留源格式"], ["noborder", "无边框"], ["width", "保留源列宽"], ["transpose", "转置"]] },
  { head: "粘贴数值", items: [["v", "值"], ["vnum", "值和数字格式"], ["vfmt", "值和源格式"]] },
  { head: "其他粘贴选项", items: [["fmt", "格式"], ["link", "粘贴链接"], ["pic", "图片"], ["piclink", "链接的图片"]] },
];

export default function App() {
  return (
    <Window>
      <Global />
      <TitleBar>
        <Title>工作簿3.xlsx - Excel</Title>
        <WindowControls>
          <WindowButton aria-label="功能区显示选项"><svg width="13" height="11" viewBox="0 0 13 11" fill="none" stroke="#fff"><path d="M.5.5h12v10H.5zM.5 2.500h12M6.500 9V4.500M4.500 6.500l2-2 2 2" /></svg></WindowButton>
          <WindowButton aria-label="最小化"><svg width="9" height="10" viewBox="0 0 9 10"><path d="M0 6h9v2H0z" fill="#fff" /></svg></WindowButton>
          <WindowButton aria-label="最大化"><svg width="10" height="10" viewBox="0 0 10 10"><path d="M.5.5h9v9h-9z" fill="none" stroke="#fff" /><path d="M0 0h10v3H0z" fill="#fff" /></svg></WindowButton>
          <WindowButton aria-label="关闭"><svg width="10" height="10" viewBox="0 0 10 10"><path d="M.8.8l8.400 8.400M9.200.8L.8 9.200" stroke="#fff" strokeWidth="2" /></svg></WindowButton>
        </WindowControls>
      </TitleBar>
      <TabRow>
        <Tab $file>文件</Tab>
        <Tab $active>开始</Tab>
        {tabs.map((t) => <Tab key={t}>{t}</Tab>)}
        <TellMe>
          <svg width="11" height="15" viewBox="0 0 11 15" fill="none" stroke="#9fd5b7"><path d="M3.500 10.500Q3.500 8.500 2 7.300A4.300 4.300 0 1 1 9 7.300Q7.500 8.500 7.500 10.500zM3.500 12.500h4M4 14.300h3" /></svg>
          <TellInput aria-label="告诉我您想要做什么" placeholder="告诉我您想要做什么..." />
        </TellMe>
        <Tab>登录</Tab>
        <ShareButton>
          <svg width="15" height="17" viewBox="0 0 15 17" fill="none" stroke="#fff" strokeWidth="1.500"><circle cx="7" cy="5.500" r="4.500" /><path d="M.8 16Q1 11 5 9.800M9 9.500l1 1M8 13.500h7M11.500 10v7" /></svg>
          共享
        </ShareButton>
      </TabRow>

      <Ribbon>
        <Group name="剪贴板" w={117} pad={4} launch>
          <Big w={45} icon={<PasteIcon />} lines={["粘贴"]} caret />
          <Stack>
            <TextButton><CutIcon />剪切</TextButton>
            <TextButton><CopyIcon />复制<Spread $w={10}><Caret /></Spread></TextButton>
            <TextButton><BrushIcon />格式刷</TextButton>
          </Stack>
        </Group>
        <Group name="字体" w={250} pad={4} launch>
          <Rows>
            <Row>
              <Combo w={157} value="等线" label="字体" />
              <Combo w={40} value="14" label="字号" />
              <IconButton $w={24} aria-label="增大字号"><FontStep up /></IconButton>
              <IconButton aria-label="减小字号"><FontStep /></IconButton>
            </Row>
            <Row>
              <IconButton><Letter>B</Letter></IconButton>
              <IconButton><Letter $i>I</Letter></IconButton>
              <IconButton><Letter $u>U</Letter></IconButton>
              <Drop label="下划线类型" />
              <Sep $m={5} />
              <IconButton aria-label="边框"><BorderIcon /></IconButton>
              <Drop label="边框类型" />
              <Sep />
              <IconButton aria-label="填充颜色"><FillIcon /></IconButton>
              <Drop label="选择填充颜色" />
              <IconButton aria-label="字体颜色"><FontColorIcon /></IconButton>
              <Drop label="选择字体颜色" />
              <Sep $m={5} />
              <IconButton><Pinyin><span>wén</span><PinyinHan>文</PinyinHan></Pinyin></IconButton>
              <Drop label="拼音选项" />
            </Row>
          </Rows>
        </Group>
        <Group name="对齐方式" w={239} pad={4} launch>
          <Rows>
            <Row>
              <IconButton aria-label="顶端对齐"><Lines rows={[[0, 14, 0], [2, 10, 3], [0, 14, 6]]} /></IconButton>
              <IconButton $on aria-label="垂直居中"><Lines rows={[[0, 14, 4], [2, 10, 7], [0, 14, 10]]} /></IconButton>
              <IconButton aria-label="底端对齐"><Lines rows={[[0, 14, 9], [2, 10, 12], [0, 14, 15]]} /></IconButton>
              <Sep />
              <IconButton aria-label="方向"><AngleIcon /></IconButton>
              <Drop label="方向选项" />
            </Row>
            <Row>
              <IconButton aria-label="左对齐"><Lines rows={[[0, 14, 3], [0, 9, 6], [0, 14, 9], [0, 9, 12]]} /></IconButton>
              <IconButton $on aria-label="居中"><Lines rows={[[0, 14, 3], [3, 8, 6], [0, 14, 9], [3, 8, 12]]} /></IconButton>
              <IconButton aria-label="右对齐"><Lines rows={[[0, 14, 3], [5, 9, 6], [0, 14, 9], [5, 9, 12]]} /></IconButton>
              <Sep />
              <IconButton aria-label="减少缩进量"><IndentIcon out /></IconButton>
              <IconButton aria-label="增加缩进量"><IndentIcon /></IconButton>
            </Row>
          </Rows>
          <Sep $tall />
          <Rows>
            <Row><TextButton><Spread $w={19}><WrapIcon /></Spread>自动换行</TextButton></Row>
            <Row><TextButton><Spread $w={19}><MergeIcon /></Spread>合并后居中<Spread $w={12}><Caret /></Spread></TextButton></Row>
          </Rows>
        </Group>
        <Group name="数字" w={140} pad={4} launch>
          <Rows>
            <Row><Combo w={131} value="常规" label="数字格式" /></Row>
            <Row>
              <IconButton aria-label="会计数字格式"><MoneyIcon /></IconButton>
              <Drop label="会计选项" />
              <IconButton $w={24}><Letter $thin>%</Letter></IconButton>
              <IconButton $w={20} aria-label="千位分隔样式"><CommaIcon /></IconButton>
              <Sep />
              <IconButton><Decimals><DecimalLine><TinyArrow left />.0</DecimalLine><span>.00</span></Decimals></IconButton>
              <IconButton><Decimals><span>.00</span><DecimalLine><TinyArrow />.0</DecimalLine></Decimals></IconButton>
            </Row>
          </Rows>
        </Group>
        <Group name="样式" w={463} pad={2}>
          <Big w={56} icon={<CondIcon />} lines={["条件格式"]} caret />
          <Big w={60} icon={<TableIcon />} lines={["套用", "表格格式"]} caret />
          <Gallery>
            <Swatches>
              {swatches.map(([n, bg, fg]) => <Swatch key={n} $bg={bg} $fg={fg} $on={n === "常规"}>{n}</Swatch>)}
            </Swatches>
            <GalleryNav>
              <GalleryStep $off aria-label="上一行"><svg width="5" height="3" viewBox="0 0 5 3"><path d="M0 3h5L2.500 0z" fill="#bbb" /></svg></GalleryStep>
              <GalleryStep aria-label="下一行"><Caret /></GalleryStep>
              <GalleryStep aria-label="其他样式"><svg width="7" height="7" viewBox="0 0 7 7" fill="#666"><path d="M0 0h7v1H0zM1 3h5L3.500 6z" /></svg></GalleryStep>
            </GalleryNav>
          </Gallery>
        </Group>
        <Group name="单元格" w={135} pad={4}>
          <Big w={42} icon={<InsertIcon />} lines={["插入"]} caret />
          <Big w={42} icon={<DeleteIcon />} lines={["删除"]} caret />
          <Big w={42} icon={<FormatIcon />} lines={["格式"]} caret />
        </Group>
        <Group name="编辑" w={229} pad={7}>
          <Stack>
            <TextButton><SigmaIcon />自动求和<Spread $w={11}><Caret /></Spread></TextButton>
            <TextButton><DownFillIcon />填充<Caret /></TextButton>
            <TextButton><EraserIcon />清除<Caret /></TextButton>
          </Stack>
          <Big w={72} icon={<SortGlyph><SortLetters><span>A</span><span>Z</span></SortLetters><FunnelIcon /></SortGlyph>} lines={["排序和筛选"]} caret />
          <Big w={60} icon={<FindIcon />} lines={["查找和选择"]} caret />
        </Group>
        <Group name="发票查验" w={55}>
          <Big w={54} icon={<InvoiceIcon />} lines={["发票", "查验"]} />
        </Group>
        <Group name="保存" w={62}>
          <Big w={60} icon={<CloudIcon />} lines={["保存到", "百度网盘"]} />
        </Group>
        <Collapse aria-label="折叠功能区"><Chevron up /></Collapse>
      </Ribbon>

      <Quick>
        <QuickButton $gap={28} aria-label="保存"><SaveIcon /></QuickButton>
        <QuickButton aria-label="恢复"><TurnIcon c="#b0b0b0" flip /></QuickButton>
        <QuickButton $drop $gap={15} aria-label="恢复列表"><Caret c="#b0b0b0" /></QuickButton>
        <QuickButton aria-label="撤消"><TurnIcon c="#3f78b5" /></QuickButton>
        <QuickButton $drop $gap={18} aria-label="撤消列表"><Caret /></QuickButton>
        <QuickButton $gap={32} aria-label="快速打印"><PrintIcon /></QuickButton>
        <QuickButton $gap={28} aria-label="打印预览"><PreviewIcon /></QuickButton>
        <QuickButton aria-label="自定义快速访问工具栏"><svg width="5" height="6" viewBox="0 0 5 6" fill="#f4f4f4"><path d="M0 0h5v1H0zM0 3h5L2.500 6z" /></svg></QuickButton>
      </Quick>
      <FormulaRow>
        <Boxed $w={124}>
          <BarInput $pad={6} aria-label="名称框" defaultValue="A3" />
          <BoxEnd><svg width="8" height="4" viewBox="0 0 8 4"><path d="M0 0h8L4 4z" fill="#666" /></svg></BoxEnd>
        </Boxed>
        <Dots $w={30}><VDots /></Dots>
        <Boxed $w={110}>
          <FnButton aria-label="取消"><svg width="11" height="10" viewBox="0 0 11 10" stroke="#bbb" strokeWidth="2"><path d="M1 1l9 8M10 1L1 9" /></svg></FnButton>
          <FnButton aria-label="输入"><svg width="13" height="11" viewBox="0 0 13 11" fill="none" stroke="#bbb" strokeWidth="2.500"><path d="M1 6l4 4 7-9" /></svg></FnButton>
          <FnButton><Fx>fx</Fx></FnButton>
        </Boxed>
        <Dots $w={3} />
        <Boxed>
          <BarInput $pad={10} aria-label="编辑栏" defaultValue="举例内容1" />
          <BoxEnd><Chevron /></BoxEnd>
        </Boxed>
      </FormulaRow>

      <GridArea>
        <GridView>
          <Table>
            <colgroup>
              <col width="23" />
              <col width="258" />
              <col width="232" />
              {cols.slice(2).map((c) => <col key={c} width="156" />)}
              <col />
            </colgroup>
            <thead>
              <tr>
                <Corner><svg width="8" height="8" viewBox="0 0 8 8"><path d="M8 0v8H0z" fill="#b5b5b5" /></svg></Corner>
                {cols.map((c) => <ColHead key={c} scope="col" $on={c === "A"}>{c}</ColHead>)}
                <ColHead />
              </tr>
            </thead>
            <tbody>
              {rows.map((r) => (
                <tr key={r}>
                  <RowHead scope="row" $on={r >= 3 && r <= 12}>{r}</RowHead>
                  {cols.map((c, i) => <Cell key={c} $fill={i === 0 && r > 3 && r <= 12}>{text(r, i)}</Cell>)}
                  <Cell />
                </tr>
              ))}
            </tbody>
          </Table>
          <CopyMarquee />
          <Selection />
          <PasteOptions>
            <CtrlButton>
              <svg width="16" height="17" viewBox="0 0 16 17"><path d="M1 3h12v13H1z" fill="#f5d25a" stroke="#111" strokeWidth="1.500" /><path d="M3.500 5V3h2q0-2.500 1.500-2.500T8.500 3h2v2z" fill="#bbb" stroke="#111" /><path d="M6.500 8.500h5l3 3v5h-8z" fill="#fff" stroke="#111" /><path d="M8 12.500h5M8 14.500h5" stroke="#111" /></svg>
              (Ctrl)<Caret c="#333" />
            </CtrlButton>
            <Menu>
              {menu.map((s) => (
                <React.Fragment key={s.head}>
                  <MenuHead>{s.head}</MenuHead>
                  <MenuGrid>
                    {s.items.map(([k, label]) => <MenuItem key={k} $on={k === "transpose"} aria-label={label}><ClipIcon kind={k} /></MenuItem>)}
                  </MenuGrid>
                </React.Fragment>
              ))}
            </Menu>
          </PasteOptions>
          <Annotation width="260" height="220" viewBox="0 0 260 220">
            <g stroke="#c01010" strokeWidth=".5" fill="#f00">
              <path d="M121.500 9.500l2 2L34 92l3 5L11.500 110.500 26 88.500l3.500 1.500z" />
              <path d="M250 156l1 3L93 205l-1 6-26-1 24-12 1 4z" />
            </g>
          </Annotation>
          <Pointer width="14" height="21" viewBox="0 0 14 21"><path d="M1.500 1.500v15l3.500-3.300 2.700 5.800 2.800-1.300-2.700-5.700H12.500z" fill="#fff" stroke="#111" /></Pointer>
        </GridView>
        <VScroll>
          <ScrollButton aria-label="向上滚动"><Tri d="u" /></ScrollButton>
          <VTrack><VThumb /></VTrack>
          <ScrollButton aria-label="向下滚动"><Tri d="d" /></ScrollButton>
        </VScroll>
      </GridArea>

      <SheetBar>
        <SheetNav><Tri d="l" c="#bbb" /><Tri d="r" c="#bbb" /></SheetNav>
        <TabSep /><SheetTab>成绩表</SheetTab>
        <TabSep /><SheetTab>员工信息</SheetTab>
        <TabSep /><SheetTab>田字格</SheetTab>
        <TabSep /><SheetTab $bg="#bdd7ee" $pad={11}>XXX公司销售额</SheetTab>
        <TabSep /><SheetTab $bg="#f4b084">课程表</SheetTab>
        <TabSep /><SheetTab $on>Sheet5</SheetTab>
        <AddSheet aria-label="新工作表"><svg width="17" height="17" viewBox="0 0 17 17" fill="none" stroke="#777"><circle cx="8.500" cy="8.500" r="7.500" /><path d="M8.500 5v7M5 8.500h7" strokeWidth="2" /></svg></AddSheet>
        <HScroll>
          <Dots $w={18}><VDots /></Dots>
          <ScrollButton aria-label="向左滚动"><Tri d="l" /></ScrollButton>
          <HTrack><HThumb /></HTrack>
          <ScrollButton aria-label="向右滚动"><Tri d="r" /></ScrollButton>
        </HScroll>
      </SheetBar>
      <StatusBar>
        <span>选定目标区域，然后按 ENTER 或选择“粘贴”</span>
        <Count>计数: 10</Count>
        <ViewButton $on aria-label="普通"><svg width="13" height="13" viewBox="0 0 13 13" fill="none" stroke="#666"><path d="M.5.5h12v12H.5zM4.500 0v13M8.500 0v13M0 4.500h13M0 8.500h13" /></svg></ViewButton>
        <ViewButton aria-label="页面布局"><svg width="13" height="13" viewBox="0 0 13 13" fill="none" stroke="#666"><path d="M.5.5h12v12H.5zM3.500 2.500h6v8h-6zM5 4.500h3M5 6.500h3M5 8.500h3" /></svg></ViewButton>
        <ViewButton aria-label="分页预览"><svg width="13" height="13" viewBox="0 0 13 13" fill="none" stroke="#666"><path d="M.5.5h12v12H.5zM3.500.5v7h6v-7M6.500.5v7" /></svg></ViewButton>
        <ZoomStep aria-label="缩小"><svg width="6" height="2" viewBox="0 0 6 2"><path d="M0 0h6v2H0z" fill="#666" /></svg></ZoomStep>
        <Zoom type="range" min={0} max={100} defaultValue={40} aria-label="缩放" />
        <ZoomStep aria-label="放大"><svg width="8" height="8" viewBox="0 0 8 8"><path d="M3 0h2v3h3v2H5v3H3V5H0V3h3z" fill="#666" /></svg></ZoomStep>
        <ZoomText>80%</ZoomText>
      </StatusBar>
      <Watermark>
        <svg width="42" height="42" viewBox="0 0 44 42">
          <path d="M42 2Q24-2 10 12-2 24 4 32q3 4 9 4-8-6-2-15Q20 6 42 2z" fill="#3aa3e0" />
          <path d="M14 31Q8 22 20 17q14-5 20 3 3 10-9 18-10 5-27 2 18 0 26-9 6-8 0-12-8-2-12 4-1 3 0 6-1 2-4 2z" fill="#5cc96a" />
          <path d="M12 28Q10 16 24 14q8 0 12 3-9-2-15 3-4 4-1 7-2 4-8 1z" fill="#2a7fcb" />
        </svg>
        <div>
          <WatermarkText>极光下载站</WatermarkText>
          <WatermarkUrl>www.xz7.com</WatermarkUrl>
        </div>
      </Watermark>
    </Window>
  );
}
